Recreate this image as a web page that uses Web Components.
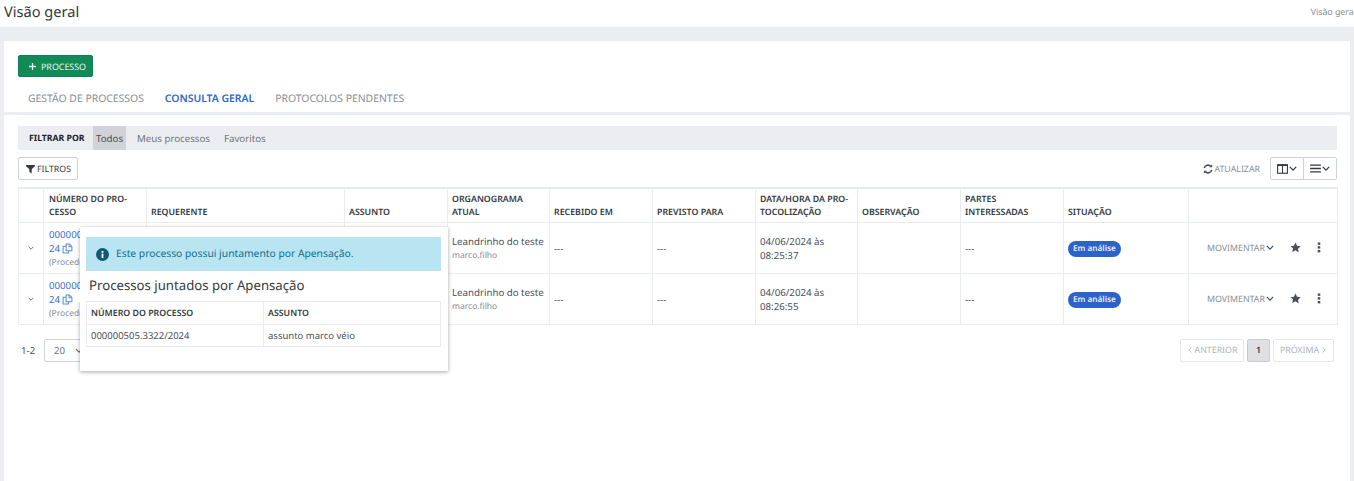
<!DOCTYPE html>
<html lang="pt-BR">
<head>
<meta charset="utf-8">
<title>Visão geral</title>
<style>
	html, body { margin: 0; height: 100%; }
	body { background: #ecedf0; font-family: "Noto Sans", "Open Sans", sans-serif; color: #495057; overflow: hidden; text-rendering: geometricPrecision; }
</style>
</head>
<body>
<app-header title="Visão geral"></app-header>
<app-main>
	<top-card></top-card>
	<consult-card>
		<filter-bar></filter-bar>
		<table-tools></table-tools>
		<process-table></process-table>
		<table-footer></table-footer>
		<join-popover></join-popover>
	</consult-card>
</app-main>

<script>
const ICONS = {
	chevron: '<svg viewBox="0 0 10 6" width="8" height="5"><path d="M1 1l4 4 4-4" fill="none" stroke="currentColor" stroke-width="1.6"/></svg>',
	filter: '<svg viewBox="0 0 12 12" width="9" height="10"><path d="M0 .5h12v1.400L7.600 6.400V12L4.400 9.800V6.400L0 1.900z" fill="currentColor"/></svg>',
	star: '<svg viewBox="0 0 24 24" width="11" height="11"><path d="M12 1l3.400 7.300 7.900 1-5.800 5.500 1.500 7.900L12 17.900l-7 3.800 1.500-7.900L.7 9.300l7.900-1z" fill="currentColor"/></svg>',
	dots: '<svg viewBox="0 0 4 12" width="4" height="11"><rect x=".6" y=".5" width="2.800" height="2.600" fill="currentColor"/><rect x=".6" y="4.600" width="2.800" height="2.600" fill="currentColor"/><rect x=".6" y="8.700" width="2.800" height="2.600" fill="currentColor"/></svg>',
	copy: '<svg viewBox="0 0 12 12" width="11" height="11" fill="none" stroke="currentColor" stroke-width="1.100"><path d="M4.500 1h3.500l2.800 2.800v4.700H4.500z"/><path d="M7.800 1v3h3"/><path d="M4.500 3.500h-3.300v7.500h6v-2.500"/></svg>',
	refresh: '<svg viewBox="0 0 12 12" width="10" height="10" fill="none" stroke="currentColor" stroke-width="1.900"><path d="M1.500 5a4.600 4.600 0 0 1 8-2"/><path d="M10.500 7a4.600 4.600 0 0 1-8 2"/><path d="M11 .5v3.500H7.500z" fill="currentColor" stroke="none"/><path d="M1 11.500V8h3.500z" fill="currentColor" stroke="none"/></svg>',
	columns: '<svg viewBox="0 0 12 11" width="11" height="10" fill="none" stroke="currentColor" stroke-width="1.200"><rect x=".6" y=".8" width="10.800" height="9.400"/><path d="M6 .8v9.400"/><path d="M.6 1.400h10.800" stroke-width="1.600"/></svg>',
	bars: '<svg viewBox="0 0 12 10" width="11" height="9"><path d="M0 .5h12v1.500H0zM0 4.200h12v1.500H0zM0 8h12v1.500H0z" fill="currentColor"/></svg>',
	plus: '<svg viewBox="0 0 10 10" width="7" height="7"><path d="M4.100 0h1.800v4.100H10v1.800H5.900V10H4.100V5.900H0V4.100h4.100z" fill="currentColor"/></svg>',
	info: '<svg viewBox="0 0 14 14" width="13" height="13"><circle cx="7" cy="7" r="7" fill="#0c5a78"/><rect x="6" y="6" width="2" height="4.800" fill="#fff"/><rect x="6" y="3.200" width="2" height="1.900" fill="#fff"/></svg>'
};

class AppHeader extends HTMLElement {
	connectedCallback() {
		const title = this.getAttribute('title');
		this.attachShadow({ mode: 'open' }).innerHTML = `
			<style>
				:host { display: flex; justify-content: space-between; align-items: center; height: 27px; background: #fff; overflow: hidden; }
				h1 { margin: 0 0 3px 4px; font-size: 14.600px; font-weight: 400; color: #343a40; }
				span { font-size: 8.800px; color: #868e96; white-space: nowrap; margin: 0 -2px 3px 0; }
			</style>
			<h1>${title}</h1>
			<span>${title}</span>`;
	}
}

class AppMain extends HTMLElement {
	connectedCallback() {
		this.attachShadow({ mode: 'open' }).innerHTML = `
			<style>
				:host { display: flex; flex-direction: column; gap: 3px; padding: 14px 4px 0; }
			</style>
			<slot></slot>`;
	}
}

class TopCard extends HTMLElement {
	connectedCallback() {
		this.attachShadow({ mode: 'open' }).innerHTML = `
			<style>
				:host { display: block; background: #fff; height: 71px; padding: 14px 14px 0; box-sizing: border-box; }
				button { display: flex; align-items: center; gap: 5px; height: 22px; width: 75px; padding: 0 0 0 10px; box-sizing: border-box; background: #128a57; border: 1px solid #0f8050; border-radius: 2px; color: #e4f3ec; font: 8.900px "Noto Sans", sans-serif; text-rendering: geometricPrecision; }
				nav { display: flex; margin-top: 5px; height: 34px; width: 1319px; border-bottom: 2px solid #e9ecef; box-sizing: border-box; }
				a { padding: 10px 10.500px 0; font-size: 10.400px; line-height: 15px; color: #868e96; height: 33px; box-sizing: border-box; }
				a:first-child { padding-left: 10px; }
				a.active { color: #2f66c9; font-weight: 600; height: 34px; border-bottom: 1px solid #2f66c9; }
				svg { display: block; }
			</style>
			<button>${ICONS.plus}PROCESSO</button>
			<nav>
				<a>GESTÃO DE PROCESSOS</a>
				<a class="active">CONSULTA GERAL</a>
				<a>PROTOCOLOS PENDENTES</a>
			</nav>`;
	}
}

class ConsultCard extends HTMLElement {
	connectedCallback() {
		this.attachShadow({ mode: 'open' }).innerHTML = `
			<style>
				:host { display: block; position: relative; background: #fff; height: 366px; padding: 11px 13px 0 14px; box-sizing: border-box; }
			</style>
			<slot></slot>`;
	}
}

class FilterBar extends HTMLElement {
	connectedCallback() {
		this.attachShadow({ mode: 'open' }).innerHTML = `
			<style>
				:host { display: flex; align-items: stretch; height: 24px; background: #ecedf0; font-size: 9.700px; color: #6c757d; }
				b { align-self: center; width: 64px; margin-left: 11px; font-size: 8.700px; font-weight: 700; color: #212529; white-space: nowrap; }
				span { display: flex; align-items: center; padding: 0 3px; margin-right: 8px; }
				span.on { background: #d2d3d7; color: #495057; }
			</style>
			<b>FILTRAR POR</b>
			<span class="on">Todos</span>
			<span>Meus processos</span>
			<span>Favoritos</span>`;
	}
}

class TableTools extends HTMLElement {
	connectedCallback() {
		this.attachShadow({ mode: 'open' }).innerHTML = `
			<style>
				:host { display: flex; align-items: center; height: 23px; margin-top: 7px; font-size: 8.800px; color: #6c757d; }
				.filters { display: flex; align-items: center; gap: 2px; height: 23px; width: 60px; padding-left: 7px; box-sizing: border-box; border: 1px solid #ced4da; border-radius: 2px; color: #343a40; }
				.refresh { display: flex; align-items: center; gap: 1px; margin-left: auto; margin-right: 10px; color: #868e96; }
				.refresh svg { color: #495057; }
				.group { display: flex; height: 23px; width: 67px; border: 1px solid #ced4da; border-radius: 2px; box-sizing: border-box; color: #343a40; }
				.group div { flex: 1; display: flex; align-items: center; justify-content: center; gap: 1px; }
				.group div + div { border-left: 1px solid #ced4da; }
				svg { display: block; }
			</style>
			<div class="filters">${ICONS.filter}FILTROS</div>
			<div class="refresh">${ICONS.refresh}ATUALIZAR</div>
			<div class="group">
				<div>${ICONS.columns}${ICONS.chevron}</div>
				<div>${ICONS.bars}${ICONS.chevron}</div>
			</div>`;
	}
}

const COLUMNS = [
	[25, ''], [103, 'NÚMERO DO PRO-<br>CESSO'], [198, 'REQUERENTE'], [103, 'ASSUNTO'],
	[102, 'ORGANOGRAMA<br>ATUAL'], [103, 'RECEBIDO EM'], [103, 'PREVISTO PARA'],
	[102, 'DATA/HORA DA PRO-<br>TOCOLIZAÇÃO'], [103, 'OBSERVAÇÃO'], [103, 'PARTES<br>INTERESSADAS'],
	[125, 'SITUAÇÃO'], [149, '']
];

const ROWS = [
	{ time: '08:25:37' },
	{ time: '08:26:55' }
];

class ProcessTable extends HTMLElement {
	connectedCallback() {
		const cols = COLUMNS.map(c => `<col style="width:${c[0]}px">`).join('');
		const head = COLUMNS.map(c => `<th>${c[1]}</th>`).join('');
		const body = ROWS.map(r => `
			<tr>
				<td class="toggle">${ICONS.chevron}</td>
				<td class="num"><a>000000505.3322/20<br>24<span class="copy">${ICONS.copy}</span></a><small>(Procedente)</small></td>
				<td></td>
				<td></td>
				<td>Leandrinho do teste<small>marco.filho</small></td>
				<td>---</td>
				<td>---</td>
				<td>04/06/2024 às<br>${r.time}</td>
				<td></td>
				<td>---</td>
				<td><status-badge>Em análise</status-badge></td>
				<td><row-actions></row-actions></td>
			</tr>`).join('');
		this.attachShadow({ mode: 'open' }).innerHTML = `
			<style>
				:host { display: block; margin-top: 7px; }
				table { table-layout: fixed; width: 1319px; border-collapse: collapse; font-size: 9.700px; color: #495057; }
				th, td { border: 1px solid #e9ecef; padding: 0 4px; text-align: left; overflow: hidden; white-space: nowrap; }
				tr:first-child th { border-top-width: 2px; }
				th { height: 29px; vertical-align: bottom; padding-bottom: 4px; font-size: 8.800px; line-height: 12.400px; font-weight: 600; color: #343a40; }
				th:nth-child(2), .num { padding-left: 5px; }
				td { height: 48px; padding-top: 2px; line-height: 14px; }
				a { color: #3a70cf; }
				small { display: block; font-size: 8.500px; line-height: 14px; color: #868e96; }
				.toggle { color: #6c757d; padding: 0 0 0 9px; }
				.toggle svg { display: block; width: 6px; height: 4px; }
				.copy { color: #5b8bd8; margin-left: 2px; }
				.copy svg { display: inline-block; vertical-align: -2px; }
			</style>
			<table>
				<colgroup>${cols}</colgroup>
				<thead><tr>${head}</tr></thead>
				<tbody>${body}</tbody>
			</table>`;
	}
}

class StatusBadge extends HTMLElement {
	connectedCallback() {
		this.attachShadow({ mode: 'open' }).innerHTML = `
			<style>
				:host { display: inline-block; height: 16px; line-height: 15px; padding: 0 5px; border-radius: 8px; background: #2d63c8; color: #e8effb; font-size: 8.200px; font-weight: 600; vertical-align: middle; }
			</style>
			<slot></slot>`;
	}
}

class RowActions extends HTMLElement {
	connectedCallback() {
		this.attachShadow({ mode: 'open' }).innerHTML = `
			<style>
				:host { display: flex; align-items: center; margin: -3px 0 0 14px; font-size: 8.800px; color: #868e96; }
				.move { display: flex; align-items: center; gap: 1px; width: 83px; }
				.move svg { color: #495057; }
				.star { width: 27px; color: #495057; }
				.dots { color: #495057; }
				svg { display: block; }
			</style>
			<div class="move">MOVIMENTAR${ICONS.chevron}</div>
			<div class="star">${ICONS.star}</div>
			<div class="dots">${ICONS.dots}</div>`;
	}
}

class TableFooter extends HTMLElement {
	connectedCallback() {
		this.attachShadow({ mode: 'open' }).innerHTML = `
			<style>
				:host { display: flex; align-items: center; height: 24px; margin-top: 13px; font-size: 9.700px; color: #495057; }
				.count { width: 23px; margin-left: 3px; }
				.size { display: flex; align-items: center; gap: 10px; height: 23px; width: 60px; padding-left: 9px; box-sizing: border-box; border: 1px solid #ced4da; border-radius: 2px; color: #6c757d; }
				.pager { display: flex; gap: 3px; margin-left: auto; margin-right: 3px; font-size: 8.800px; color: #adb5bd; }
				.pager div { display: flex; align-items: center; justify-content: center; gap: 2px; height: 23px; box-sizing: border-box; border: 1px solid #e4e6e9; border-radius: 2px; }
				.pager .current { width: 23px; background: #dfe0e3; border-color: #c9cbcf; color: #343a40; font-weight: 600; }
				.prev { width: 64px; }
				.next { width: 61px; }
				.flip { transform: rotate(90deg); }
				.flop { transform: rotate(-90deg); }
				.pager svg { width: 6px; height: 4px; }
				svg { display: block; }
			</style>
			<span class="count">1-2</span>
			<div class="size">20 ${ICONS.chevron}</div>
			<div class="pager">
				<div class="prev"><span class="flip">${ICONS.chevron}</span>ANTERIOR</div>
				<div class="current">1</div>
				<div class="next">PRÓXIMA<span class="flop">${ICONS.chevron}</span></div>
			</div>`;
	}
}

class JoinPopover extends HTMLElement {
	connectedCallback() {
		this.attachShadow({ mode: 'open' }).innerHTML = `
			<style>
				:host { position: absolute; left: 76px; top: 112px; width: 368px; height: 144px; box-sizing: border-box; padding: 10px 7px 0 6px; background: #fff; box-shadow: 0 1px 4px rgba(0,0,0,.35); font-size: 9.500px; color: #495057; }
				:host::before { content: ""; position: absolute; left: -5px; top: 64px; width: 10px; height: 10px; background: #fff; transform: rotate(45deg); }
				.alert { position: relative; display: flex; align-items: center; gap: 7px; height: 34px; padding-left: 10px; background: #b9e5f3; color: #0f6f8c; font-size: 10.300px; }
				h2 { margin: 4px 0 5px 3px; font-size: 13.200px; line-height: 21px; font-weight: 400; color: #343a40; }
				table { width: 100%; border-collapse: collapse; table-layout: fixed; }
				th, td { border: 1px solid #e9ecef; padding: 0 4px; height: 22px; text-align: left; }
				td { height: 21px; }
				th { font-size: 8.800px; font-weight: 600; color: #343a40; }
				svg { display: block; }
			</style>
			<div class="alert">${ICONS.info}<span>Este processo possui juntamento por Apensação.</span></div>
			<h2>Processos juntados por Apensação</h2>
			<table>
				<colgroup><col style="width:177px"><col></colgroup>
				<tr><th>NÚMERO DO PROCESSO</th><th>ASSUNTO</th></tr>
				<tr><td>000000505.3322/2024</td><td>assunto marco véio</td></tr>
			</table>`;
	}
}

customElements.define('app-header', AppHeader);
customElements.define('app-main', AppMain);
customElements.define('top-card', TopCard);
customElements.define('consult-card', ConsultCard);
customElements.define('filter-bar', FilterBar);
customElements.define('table-tools', TableTools);
customElements.define('process-table', ProcessTable);
customElements.define('status-badge', StatusBadge);
customElements.define('row-actions', RowActions);
customElements.define('table-footer', TableFooter);
customElements.define('join-popover', JoinPopover);
</script>
</body>
</html>
